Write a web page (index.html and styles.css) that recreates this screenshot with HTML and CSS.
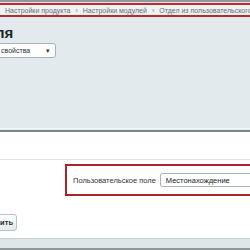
FILE: index.html
```html
<!DOCTYPE html>
<html lang="ru">
<head>
    <meta charset="UTF-8">
    <title>Настройки</title>
    <link rel="stylesheet" href="styles.css">
</head>
<body>
    <div class="page">
        <div class="topbar"></div>
        <div class="breadcrumbs">
            <span class="crumb">Настройки продукта</span>
            <span class="sep">›</span>
            <span class="crumb">Настройки модулей</span>
            <span class="sep">›</span>
            <span class="crumb">Отдел из пользовательского свойства</span>
        </div>
        <div class="header">
            <h1 class="title">ля</h1>
            <div class="select">
                <span>свойства</span>
                <span class="arrow">▾</span>
            </div>
        </div>
        <div class="divider"></div>
        <div class="content">
            <div class="content-line"></div>
            <div class="field-row">
                <div class="field-box">
                    <span class="field-label">Пользовательское поле</span>
                    <div class="field-input">Местонахождение</div>
                </div>
            </div>
            <div class="buttons">
                <button class="save-btn">Сохранить</button>
            </div>
        </div>
        <div class="footer"></div>
    </div>
</body>
</html>
```

FILE: styles.css
```css
body {
    margin: 0;
    font-family: Arial, "Liberation Sans", sans-serif;
    color: #2a2f31;
}

.page {
    width: 250px;
    height: 250px;
    overflow: hidden;
    background-color: #e2eaed;
    display: flex;
    flex-direction: column;
}

.topbar {
    height: 2px;
    background-color: #8e979a;
    flex-shrink: 0;
}

.breadcrumbs {
    margin-top: 1px;
    height: 10px;
    border-top: 2px solid #c3262f;
    border-bottom: 2px solid #c3262f;
    background-color: #eef2f3;
    display: flex;
    align-items: center;
    white-space: nowrap;
    font-size: 7px;
    color: #636c6f;
    padding-left: 5px;
    flex-shrink: 0;
}

.sep {
    margin: 0 5px;
    color: #7a8386;
}

.header {
    padding-top: 9px;
    height: 102px;
    flex-shrink: 0;
}

.title {
    margin: 0 0 3px -5px;
    font-size: 15px;
    font-weight: bold;
    line-height: 14px;
    color: #1f2527;
}

.select {
    width: 54px;
    height: 13px;
    margin-left: -4px;
    padding-left: 4px;
    background-color: #fff;
    border: 1px solid #a8b3b7;
    border-radius: 3px;
    display: flex;
    align-items: center;
    justify-content: space-between;
    font-size: 7px;
    color: #2a2f31;
}

.arrow {
    font-size: 7px;
    margin-right: 5px;
}

.divider {
    height: 1px;
    border-top: 1px solid #f4f7f8;
    border-bottom: 2px solid #7c8488;
    flex-shrink: 0;
}

.content {
    background-color: #fff;
    flex: 1;
    display: flex;
    flex-direction: column;
}

.content-line {
    margin-top: 27px;
    height: 1px;
    background-color: #dfe5e7;
}

.field-row {
    padding: 4px 0 0 65px;
}

.field-box {
    display: flex;
    align-items: center;
    gap: 4px;
    height: 28px;
    padding-left: 6px;
    border: 2px solid #b0222a;
    border-right: none;
    white-space: nowrap;
    font-size: 7.5px;
    color: #333;
}

.field-input {
    flex-shrink: 0;
    width: 120px;
    height: 12px;
    padding-left: 5px;
    border: 1px solid #a9b4b8;
    border-radius: 2px;
    display: flex;
    align-items: center;
    font-size: 7.5px;
    color: #222;
}

.buttons {
    padding-top: 15px;
}

.save-btn {
    margin-left: -30px;
    width: 47px;
    height: 17px;
    padding: 0 3px 0 0;
    font-family: Arial, "Liberation Sans", sans-serif;
    font-size: 7.5px;
    font-weight: bold;
    text-align: right;
    color: #2a2f31;
    background: linear-gradient(#ffffff, #e3e8ea);
    border: 1px solid #b9c2c5;
    border-radius: 3px;
}

.footer {
    height: 9px;
    background-color: #dfe6e8;
    border-top: 1px solid #c9d1d4;
    border-bottom: 2px solid #8e979a;
    flex-shrink: 0;
}
```
